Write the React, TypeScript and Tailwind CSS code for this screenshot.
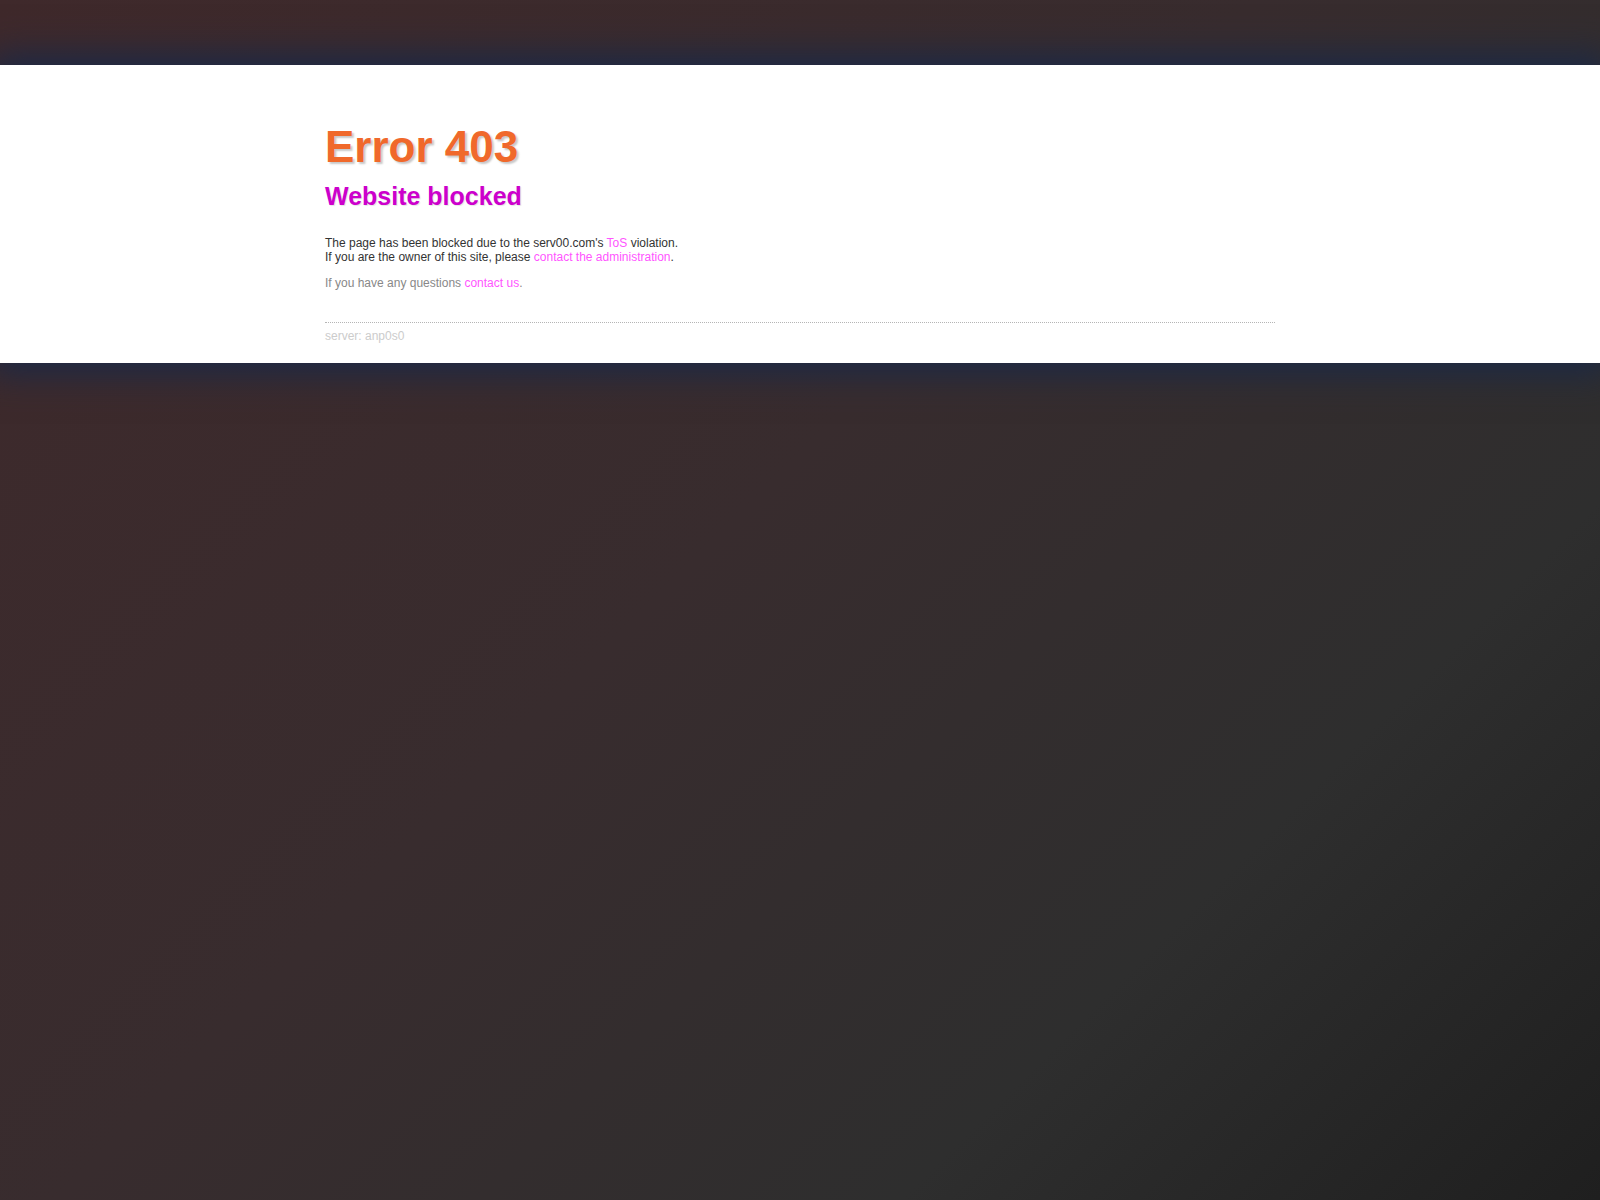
export default function App() {
  return (
    <div className="min-h-screen w-full bg-[linear-gradient(135deg,#3f292b_0%,#382c2e_45%,#2e2e2e_75%,#1f1f1f_100%)] pt-[65px] font-['Liberation_Sans',Arial,sans-serif]">
      <div className="bg-white shadow-[0_0_34px_10px_#1b2947]">
        <div className="mx-auto w-[950px] pt-[57px] pb-[20px]">
          <h1 className="text-[44px] leading-[50px] font-bold text-[#f0692b] [text-shadow:2px_2px_2px_#c8c8c8]">
            Error 403
          </h1>
          <h2 className="mt-[10px] text-[25px] leading-[29px] font-bold text-[#cc00cc] [text-shadow:1px_1px_1px_#e6e6e6]">
            Website blocked
          </h2>
          <p className="mt-[25px] text-[12px] leading-[14px] text-[#333333]">
            The page has been blocked due to the serv00.com's{' '}
            <a href="#" className="text-[#ff55ff]">ToS</a> violation.
            <br />
            If you are the owner of this site, please{' '}
            <a href="#" className="text-[#ff55ff]">contact the administration</a>.
          </p>
          <p className="mt-[12px] text-[12px] leading-[14px] text-[#888888]">
            If you have any questions <a href="#" className="text-[#ff55ff]">contact us</a>.
          </p>
          <div className="mt-[32px] border-t border-dotted border-[#b5b5b5]" />
          <p className="mt-[6px] text-[12px] leading-[14px] text-[#cccccc]">server: anp0s0</p>
        </div>
      </div>
    </div>
  );
}
